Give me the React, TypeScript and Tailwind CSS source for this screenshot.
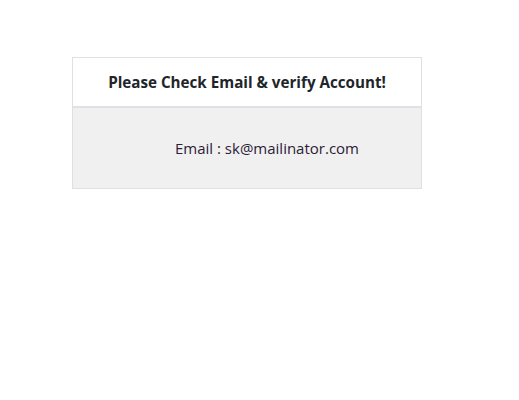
import React from 'react';

export default function App() {
  return (
    <div className="min-h-[400px] w-full bg-white pt-[57px] pl-[72px]" style={{ fontFamily: '"Open Sans", "Noto Sans", sans-serif' }}>
      <div className="w-[350px] border border-[#e0e0e0]">
        {/* Header */}
        <div className="h-[50px] flex items-center justify-center bg-white border-b-2 border-[#dee2e6]">
          <span className="text-[15.2px] font-bold text-[#212529]">Please Check Email &amp; verify Account!</span>
        </div>
        {/* Body */}
        <div className="h-[80px] flex items-center bg-[#f0f0f0] pl-[102px]">
          <span className="text-[15px] text-[#2b2136]">Email : sk@mailinator.com</span>
        </div>
      </div>
    </div>
  );
}
